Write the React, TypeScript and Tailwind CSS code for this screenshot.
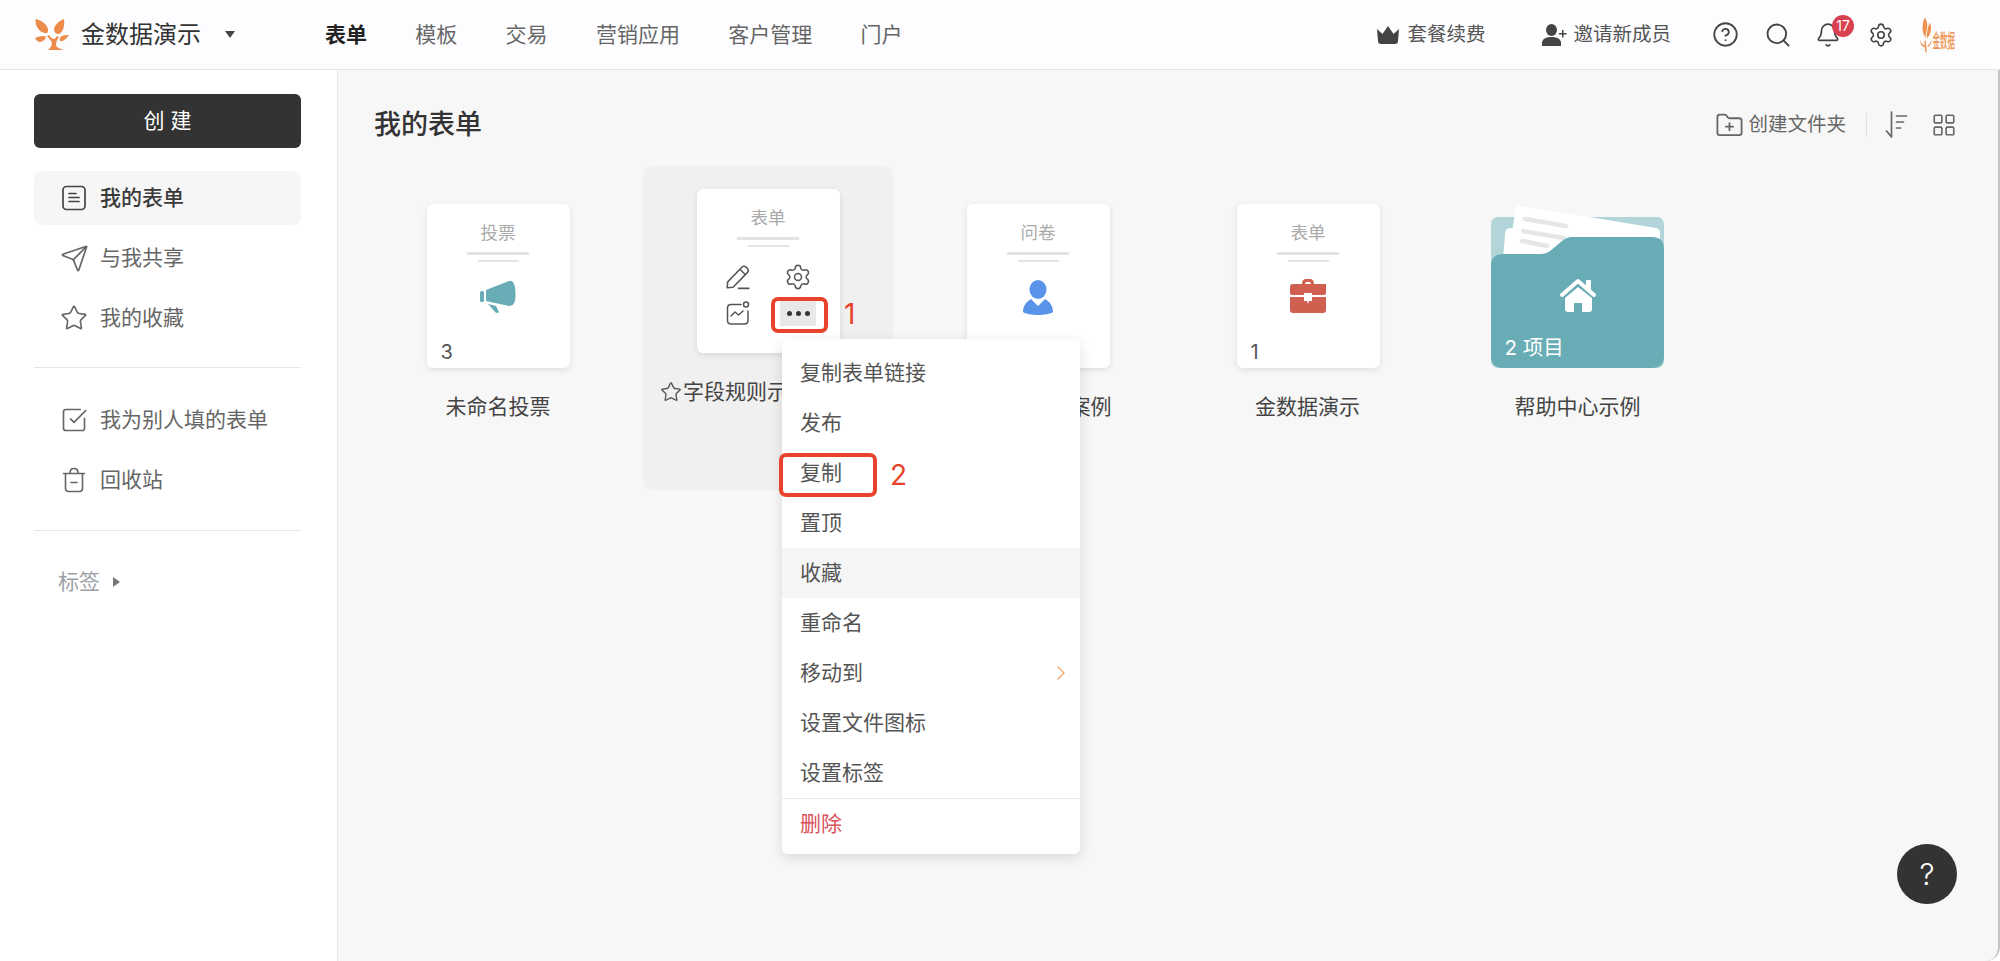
import { Bell, ChevronRight, CircleHelp, FolderPlus, LayoutGrid, Search, Send, Settings, SquareCheckBig, Star } from 'lucide-react'
import type { ReactNode } from 'react'

const FONT = 'font-["Inter","Noto_Sans_CJK_SC",sans-serif]'

const navItems = ['模板', '交易', '营销应用', '客户管理', '门户']

const TreeLogo = () => (
	<svg width="36" height="32" viewBox="0 0 36 32" fill="#ec8c4b">
		<path d="M0.500 0 C6 1 12 5 13 10 C13.500 13 12 15 10 14 C4 13 0 7 0.500 0 Z" />
		<path d="M29 0 C30 7 28 13 24 15 C21 15 19 13 19 10 C20 5 24 2 29 0 Z" />
		<path d="M0 19 C4 17 9 16 11 18 C10 22 6 23 4 23 C2 22 1 21 0 19 Z" />
		<path d="M34 16 C31 20 28 23 25 22 C24 20 25 18 27 17 C29 16 32 16 34 16 Z" />
		<path d="M13 31 C15 29 17 27 17 24 C17 22 14 20 12 17 L14 16 C16 19 18 20 19 20 C20 20 21 18 22 17 L24 18 C22 21 21 23 21 26 C21 28 24 29 28 31 Z" />
	</svg>
)

const BrandMark = () => (
	<div className="flex h-[36px] w-[35px] items-end">
		<svg width="13" height="36" viewBox="0 0 13 36" fill="#f0914f">
			<path d="M5 0 C8 4 8 9 7 13 C6 15 6 18 6 21 C3 17 2 12 3 7 C3 4 4 2 5 0 Z" />
			<path d="M10 5 C12 8 12 13 10 18 C8 20 7 22 7 22 C7 15 8 10 10 5 Z" />
			<path d="M6 24 L7 36 L5.500 36 L4.500 24 Z" />
			<path d="M0 23 C1 26 2 28 5 29 L5 31 C2 30 0 27 0 23 Z" />
			<path d="M12 23 C12 26 11 29 8 31 L8 29 C10 28 11 26 12 23 Z" />
		</svg>
		<span className="origin-bottom scale-y-[2.600] whitespace-nowrap text-[7.500px] font-medium leading-[8px] text-[#f0914f]">金数据</span>
	</div>
)

const FormIcon = () => (
	<svg width="24" height="26" viewBox="0 0 24 26" fill="none" stroke="#444" strokeWidth="1.700" strokeLinecap="round">
		<rect x="1" y="1.500" width="22" height="23" rx="3.500" />
		<path d="M7 8.500h7M7 12.500h10M7 16.500h10" />
	</svg>
)

const TrashIcon = () => (
	<svg width="24" height="26" viewBox="0 0 24 26" fill="none" stroke="#666" strokeWidth="1.600" strokeLinecap="round" strokeLinejoin="round">
		<path d="M1.500 6.500h21M8 6 Q8 1.500 12 1.500 Q16 1.500 16 6" />
		<path d="M3.500 7 V21.500 Q3.500 24.500 6.500 24.500 H17.500 Q20.500 24.500 20.500 21.500 V7" />
		<path d="M9 15.500h6" />
	</svg>
)

const Crown = () => (
	<svg width="22" height="18" viewBox="0 0 22 18" fill="#444">
		<path d="M0 3 L5.500 8 L11 0 L16.500 8 L22 3 L21 15 Q21 18 18 18 H4 Q1 18 1 15 Z" />
	</svg>
)

const UserAdd = () => (
	<svg width="25" height="22" viewBox="0 0 25 22" fill="#444">
		<ellipse cx="9.500" cy="6" rx="5.500" ry="6" />
		<path d="M0 22 V19 C0 15 4 13 9.500 13 C15 13 19 15 19 19 V22 Z" />
		<path d="M20 6h1.500v3h3v1.500h-3v3H20v-3h-3V9h3Z" />
	</svg>
)

const SortIcon = () => (
	<svg width="23" height="30" viewBox="0 0 22 30" fill="none" stroke="#666" strokeWidth="1.700" strokeLinecap="round" strokeLinejoin="round">
		<path d="M6 2 V27 L1 21" />
		<path d="M11 6h10M11 12h7M11 18h4" />
	</svg>
)

const Megaphone = () => (
	<svg width="36" height="34" viewBox="0 0 36 34" fill="#68adb5">
		<rect x="0" y="11" width="4" height="11" rx="1.500" />
		<path d="M6 10 L29 1 Q35 -1 35.500 13 Q36 27 29 26 L6 21 Z" />
		<path d="M8 24 L16 26 L19 32 Q17 34 15 32 Z" />
	</svg>
)

const Person = () => (
	<svg width="32" height="36" viewBox="0 0 32 36" fill="#5a94ea">
		<ellipse cx="16" cy="9.500" rx="8.500" ry="9.500" />
		<path d="M1 32 C1 26 4 22 9 19 L16 26 L23 19 C28 22 31 26 31 32 C26 36 6 36 1 32 Z" />
	</svg>
)

const Briefcase = () => (
	<svg width="36" height="34" viewBox="0 0 36 34" fill="#d15f50">
		<path d="M12 5 Q12 0 16 0 H20 Q24 0 24 5 H36 V14 Q36 16 34 16 H22 V14 H14 V16 H2 Q0 16 0 14 V8 Q0 5 3 5 Z M15 5 H21 Q21 3 19 3 H17 Q15 3 15 5 Z" fillRule="evenodd" />
		<path d="M0 18 H14 V22 H17 L18 25 L19 22 H22 V18 H36 V31 Q36 34 33 34 H3 Q0 34 0 31 Z" />
	</svg>
)

const PencilIcon = () => (
	<svg width="26" height="26" viewBox="0 0 24 24" fill="none" stroke="#555" strokeWidth="1.400" strokeLinecap="round" strokeLinejoin="round">
		<path d="M2 22 L2.500 16.500 L16 2.500 Q17.500 1.500 19 2.500 L21 4.500 Q22 6 21 7.500 L7.500 21.500 Z" />
		<path d="M14 5 L18.500 9.500M12.500 22.500 H22" />
	</svg>
)

const ChartIcon = () => (
	<svg width="24" height="24" viewBox="0 0 24 24" fill="none" stroke="#555" strokeWidth="1.500" strokeLinecap="round" strokeLinejoin="round">
		<path d="M15 3.500 H5 Q1.500 3.500 1.500 7 V19.500 Q1.500 23 5 23 H18 Q22 23 22 19.500 V10" />
		<circle cx="20" cy="3.500" r="2.500" />
		<path d="M5 15 L9 11 L12.500 14 L17 10" />
	</svg>
)

const FolderArt = () => (
	<svg width="195" height="175" viewBox="0 0 195 175">
		<rect x="11" y="17" width="173" height="151" rx="7" fill="#b1d5d8" />
		<path d="M23 60 L25 34 Q25 28 31 28 L80 28 L80 60 Z" fill="#ffffff" />
		<path d="M29 60 L35 10 Q36 5 42 6 L176 28 Q181 29 180 36 L180 60 Z" fill="#ffffff" />
		<path d="M45 19 L86 26M43 31 L84 38M42 41 L67 46" stroke="#e6e6e6" strokeWidth="4.500" strokeLinecap="round" />
		<path d="M11 66 Q11 54 23 54 L62 54 Q66 54 70 51 L82 41 Q87 37 92 37 L172 37 Q184 37 184 49 L184 156 Q184 168 172 168 L23 168 Q11 168 11 156 Z" fill="#68adb5" />
		<path d="M106 80 h5 v10 h-5 Z" fill="#ffffff" />
		<path d="M82 95 L98 81 L114 95" stroke="#ffffff" strokeWidth="4" strokeLinecap="round" strokeLinejoin="round" fill="none" />
		<path d="M85 98 L98 87 L112 98 V109 Q112 112 109 112 H102 V103 H94 V112 H88 Q85 112 85 109 Z" fill="#ffffff" />
	</svg>
)

const SideItem = ({ icon, label, active }: { icon: ReactNode; label: string; active?: boolean }) => (
	<div className={`flex h-[54px] items-center gap-[14px] rounded-[8px] pl-[28px] text-[21px] ${active ? 'bg-[#f6f6f6] font-medium text-[#3a3a3a]' : 'text-[#666]'}`}>
		<span className="flex w-[24px] justify-center">{icon}</span>
		{label}
	</div>
)

const FormCard = ({ type, count, children }: { type: string; count?: string; children?: ReactNode }) => (
	<div className="relative flex h-[164px] w-[143px] flex-col items-center rounded-[6px] bg-white pt-[17px] shadow-[0_2px_6px_rgba(0,0,0,0.1)]">
		<div className="text-[17.500px] leading-[24px] text-[#aaa]">{type}</div>
		<div className="mt-[7px] h-[2.500px] w-[62px] bg-[#e4e4e4]" />
		<div className="mt-[5px] h-[2.500px] w-[41px] bg-[#e4e4e4]" />
		{children}
		{count && <span className="absolute bottom-[3px] left-[14px] text-[20px] leading-[26px] text-[#555]">{count}</span>}
	</div>
)

const menuItems = ['复制表单链接', '发布', '复制', '置顶', '收藏', '重命名', '移动到', '设置文件图标', '设置标签']

const App = () => {
	return (
		<div className={`flex h-screen w-full flex-col overflow-hidden bg-white ${FONT}`}>
			<header className="flex h-[70px] shrink-0 items-center border-b border-[#e4e4e6] bg-[#fdfdff] pl-[35px] pr-[45px]">
				<TreeLogo />
				<span className="ml-[10px] text-[24px] text-[#333]">金数据演示</span>
				<span className="ml-[24px] h-0 w-0 border-x-[5.500px] border-t-[7px] border-x-transparent border-t-[#444]" />
				<nav className="ml-[90px] flex items-center gap-[48.300px] text-[21px] text-[#666]">
					<span className="font-bold text-[#222]">表单</span>
					{navItems.map(item => (
						<span key={item}>{item}</span>
					))}
				</nav>
				<div className="ml-auto flex items-center text-[19.500px] text-[#555]">
					<Crown />
					<span className="ml-[8px]">套餐续费</span>
					<span className="ml-[57px]"><UserAdd /></span>
					<span className="ml-[6px]">邀请新成员</span>
					<CircleHelp className="ml-[41px]" size={27} strokeWidth={1.600} color="#444" />
					<Search className="ml-[25px]" size={28} strokeWidth={1.600} color="#444" />
					<span className="relative ml-[23px]">
						<Bell size={26} strokeWidth={1.500} color="#444" />
						<span className="absolute -top-[7px] left-[17px] flex h-[22px] w-[22px] items-center justify-center rounded-full bg-[#d9414f] text-[14px] text-white">17</span>
					</span>
					<Settings className="ml-[27px]" size={26} strokeWidth={1.500} color="#444" />
					<span className="ml-[26px]"><BrandMark /></span>
				</div>
			</header>

			<div className="flex min-h-0 flex-1">
				<aside className="w-[338px] shrink-0 border-r border-[#e8e8e8] bg-white px-[34px] pr-[36px] pt-[24px]">
					<button className="flex h-[54px] w-full items-center justify-center rounded-[6px] bg-[#333] pl-[6px] text-[21px] tracking-[6px] text-white">创建</button>
					<div className="mt-[23px] flex flex-col gap-[6px]">
						<SideItem active icon={<FormIcon />} label="我的表单" />
						<SideItem icon={<Send className="shrink-0" size={29} strokeWidth={1.400} color="#666" />} label="与我共享" />
						<SideItem icon={<Star className="shrink-0" size={28} strokeWidth={1.400} color="#666" />} label="我的收藏" />
					</div>
					<div className="mt-[22px] h-px bg-[#e6e6e6]" />
					<div className="mt-[25px] flex flex-col gap-[6px]">
						<SideItem icon={<SquareCheckBig className="shrink-0" size={28} strokeWidth={1.400} color="#666" />} label="我为别人填的表单" />
						<SideItem icon={<TrashIcon />} label="回收站" />
					</div>
					<div className="mt-[23px] h-px bg-[#e6e6e6]" />
					<div className="mt-[36px] flex items-center pl-[24px] text-[21px] leading-[30px] text-[#9b9fa6]">
						标签
						<span className="ml-[13px] h-0 w-0 border-y-[5px] border-l-[7px] border-y-transparent border-l-[#777]" />
					</div>
				</aside>

				<main className="relative flex-1 rounded-br-[14px] border-r-2 border-[#c4c4c4] bg-[#f7f7f7] pl-[35px] pt-[36px]">
					<div className="flex h-[38px] items-center pl-[1px] pr-[41px]">
						<h1 className="text-[27px] font-medium text-[#333]">我的表单</h1>
						<div className="ml-auto flex items-center text-[19.500px] text-[#666]">
							<FolderPlus size={29} strokeWidth={1.500} color="#666" />
							<span className="ml-[4px]">创建文件夹</span>
							<span className="ml-[20px] h-[24px] w-px bg-[#e2e2e2]" />
							<span className="ml-[18px]"><SortIcon /></span>
							<LayoutGrid className="ml-[23px]" size={26} strokeWidth={1.500} color="#666" />
						</div>
					</div>

					<div className="mt-[22px] flex gap-[20px]">
						<div className="flex h-[324px] w-[250px] flex-col items-center pt-[38px]">
							<FormCard type="投票" count="3">
								<div className="mt-[18px]"><Megaphone /></div>
							</FormCard>
							<div className="mt-[24px] text-[21px] leading-[30px] text-[#444]">未命名投票</div>
						</div>

						<div className="relative flex h-[324px] w-[250px] flex-col items-center rounded-[8px] bg-[#f0f0f0] pt-[23px]">
							<FormCard type="表单">
								<div className="mt-[14px] grid grid-cols-2 gap-x-[24px] gap-y-[4px]">
									<span className="flex h-[32px] w-[36px] items-center justify-center"><PencilIcon /></span>
									<span className="flex h-[32px] w-[36px] items-center justify-center"><Settings size={28} strokeWidth={1.300} color="#555" /></span>
									<span className="flex h-[32px] w-[36px] items-center justify-center"><ChartIcon /></span>
									<span className="flex h-[26px] w-[36px] items-center justify-center gap-[4px] self-center bg-[#e8e8e8]">
										<i className="h-[5px] w-[5px] rounded-full bg-[#333]" />
										<i className="h-[5px] w-[5px] rounded-full bg-[#333]" />
										<i className="h-[5px] w-[5px] rounded-full bg-[#333]" />
									</span>
								</div>
							</FormCard>
							<div className="mt-[24px] flex w-full items-center gap-[1px] whitespace-nowrap pl-[17px] text-[21px] leading-[30px] text-[#444]">
								<Star size={22} strokeWidth={1.500} color="#555" />
								字段规则示例
							</div>

							<div className="absolute left-[128px] top-[131px] z-20 h-[36px] w-[57px] rounded-[7px] border-[4px] border-[#e8442c]" />
							<span className="absolute left-[201px] top-[129px] z-20 text-[28px] leading-[38px] text-[#e8442c]">1</span>

							<div className="absolute left-[139px] top-[173px] z-10 w-[298px] rounded-[6px] bg-white pb-[6px] pt-[9px] text-[21px] text-[#555] shadow-[0_4px_14px_rgba(0,0,0,0.12)]">
								{menuItems.map(item => (
									<div key={item} className={`flex h-[50px] items-center justify-between pl-[18px] pr-[12px] ${item === '收藏' ? 'bg-[#f5f5f5]' : ''}`}>
										{item}
										{item === '移动到' && <ChevronRight className="-mr-[5px]" size={24} strokeWidth={1.300} color="#f2a064" />}
									</div>
								))}
								<div className="flex h-[50px] items-center border-t border-[#ececec] pl-[18px] text-[#d9505e]">删除</div>
							</div>

							<div className="absolute left-[136px] top-[287px] z-20 h-[44px] w-[98px] rounded-[7px] border-[4px] border-[#e8442c]" />
							<span className="absolute left-[247px] top-[290px] z-20 text-[28px] leading-[38px] text-[#e8442c]">2</span>
						</div>

						<div className="flex h-[324px] w-[250px] flex-col items-center pt-[38px]">
							<FormCard type="问卷">
								<div className="mt-[18px]"><Person /></div>
							</FormCard>
							<div className="mt-[24px] text-[21px] leading-[30px] text-[#444]">满意度问卷案例</div>
						</div>

						<div className="flex h-[324px] w-[250px] flex-col items-center">
							<div className="mt-[38px]">
								<FormCard type="表单" count="1">
									<div className="mt-[17px]"><Briefcase /></div>
								</FormCard>
							</div>
							<div className="-ml-[1px] mt-[24px] text-[21px] leading-[30px] text-[#444]">金数据演示</div>
						</div>

						<div className="flex h-[324px] w-[250px] flex-col items-center">
							<div className="relative -ml-[2px] mt-[34px] h-[168px] w-[195px]">
								<FolderArt />
								<span className="absolute left-[25px] top-[134px] text-[20.500px] leading-[28px] text-white">2 项目</span>
							</div>
							<div className="-ml-[1px] mt-[24px] text-[21px] leading-[30px] text-[#444]">帮助中心示例</div>
						</div>
					</div>

					<button className="absolute bottom-[57px] right-[41px] flex h-[60px] w-[60px] items-center justify-center rounded-full bg-[#333] text-[30px] font-light text-white">?</button>
				</main>
			</div>
		</div>
	)
}

export default App
